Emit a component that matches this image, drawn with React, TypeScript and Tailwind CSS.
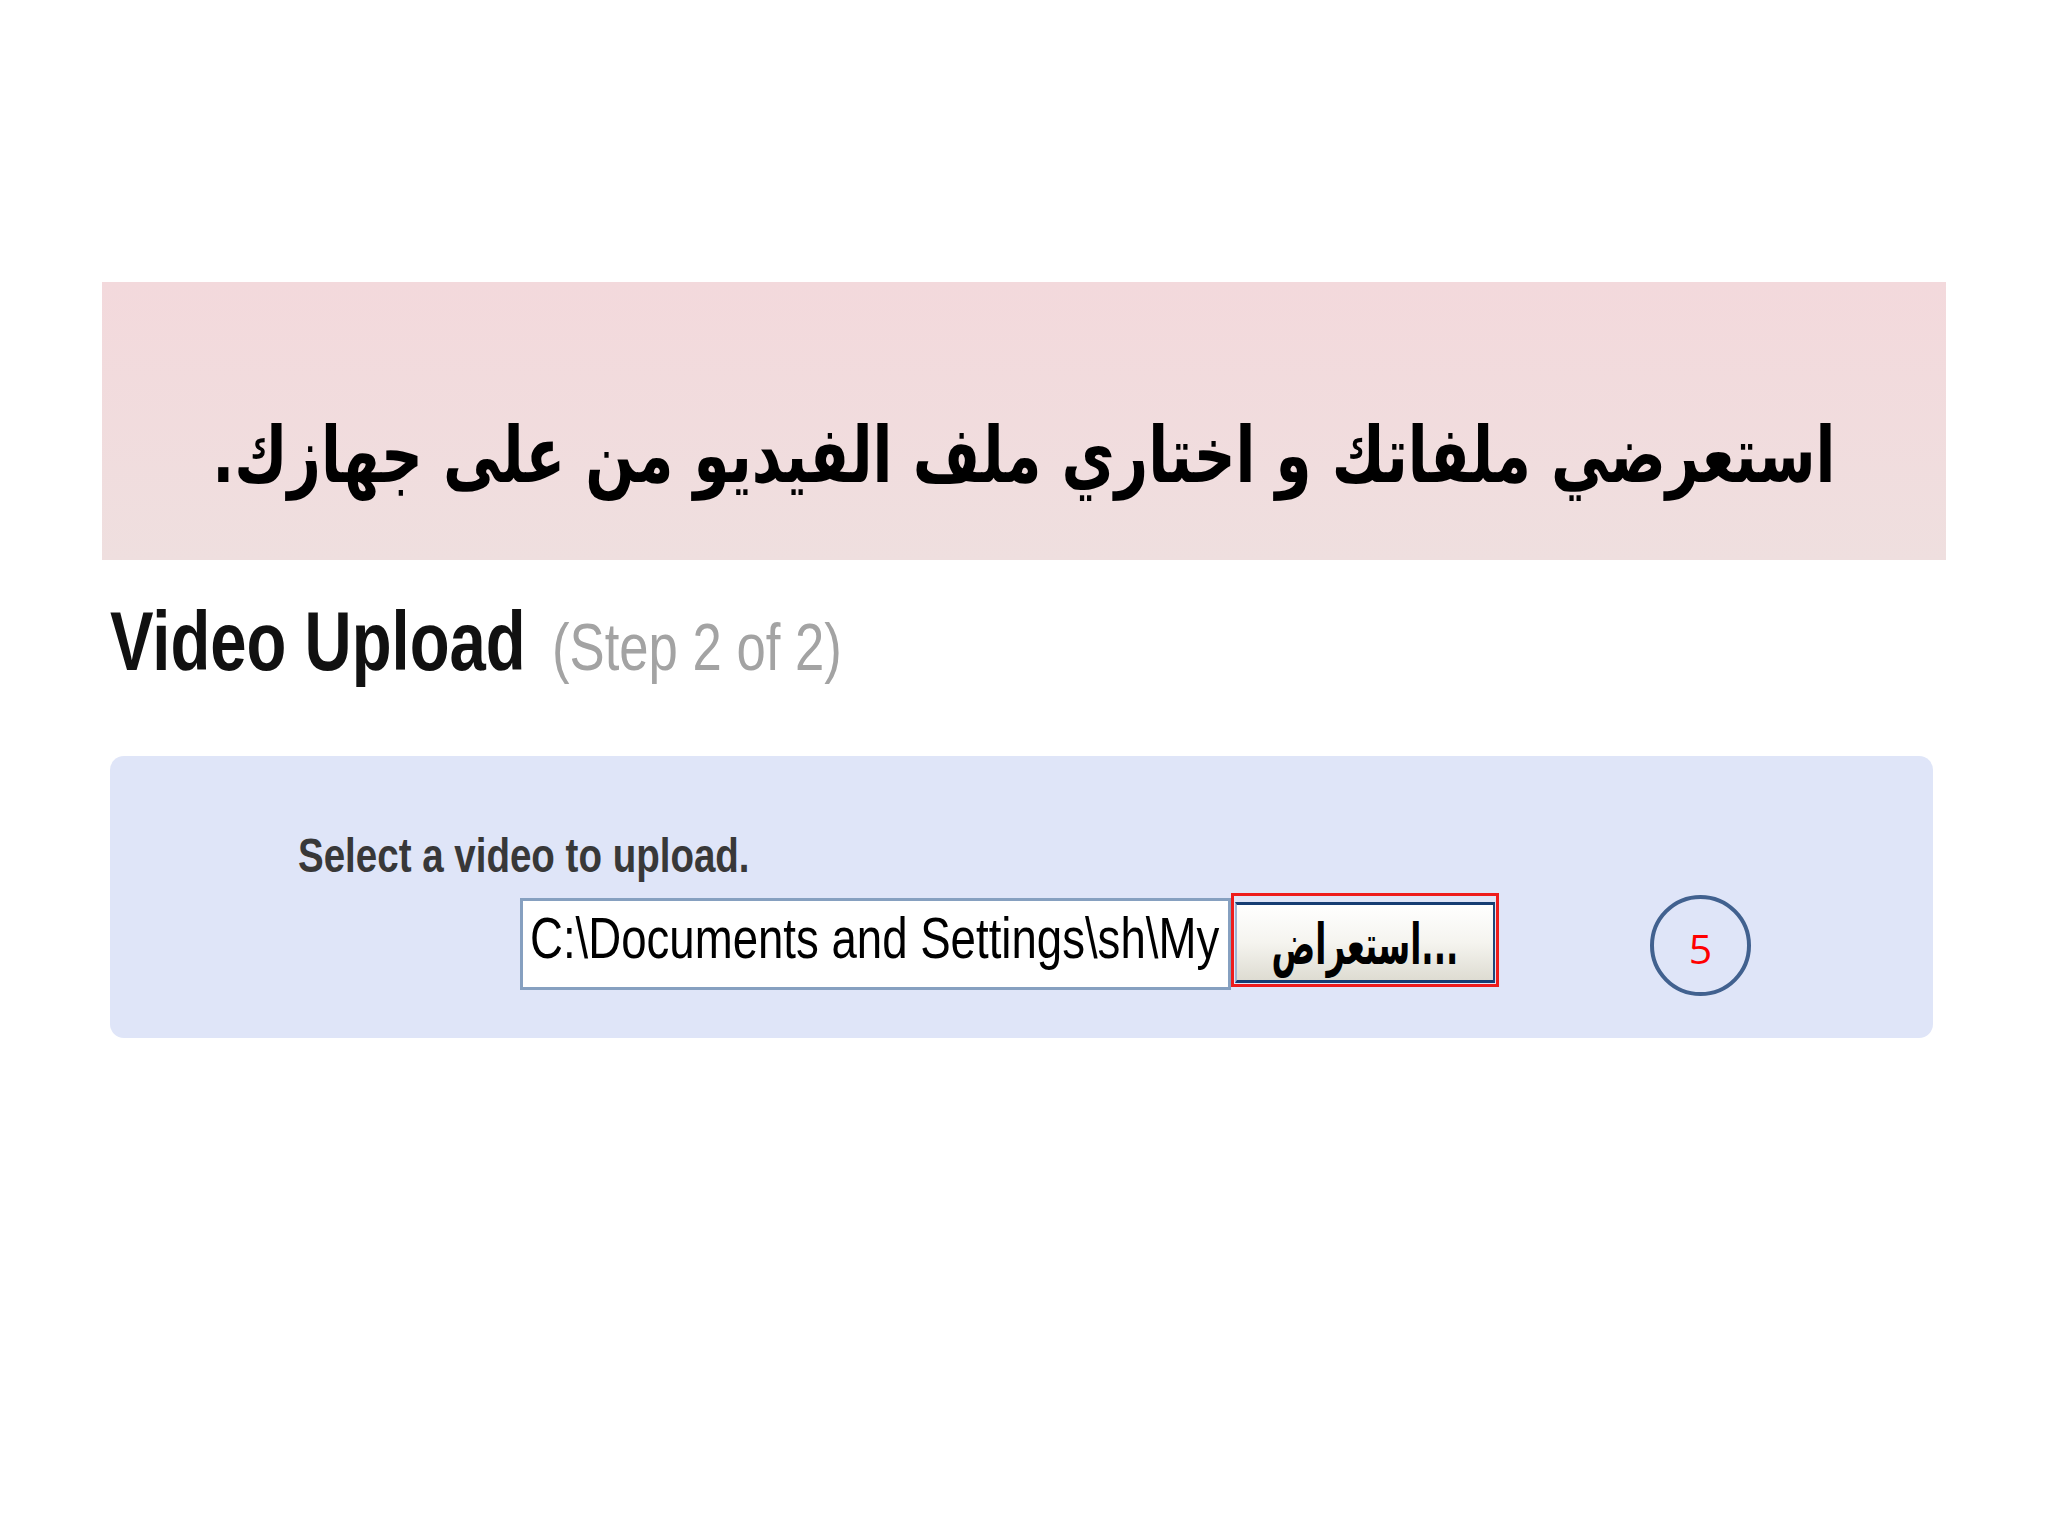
const latin = { fontFamily: '"Liberation Sans", Arial, sans-serif' };
const arabic = { fontFamily: '"DejaVu Sans", "Liberation Sans", sans-serif' };

// the source shot is squeezed horizontally; every latin label shares that ratio
function Squeezed({ children, className = '' }: { children: React.ReactNode; className?: string }) {
  return (
    <span className={`inline-block origin-left scale-x-[0.786] whitespace-nowrap ${className}`}>
      {children}
    </span>
  );
}

function BrowseButton() {
  return (
    <div className="h-[94px] w-[268px] border-[3px] border-[#ee1c1c] px-[1px] pt-[6px] pb-[1px]">
      <div className="flex h-full w-full items-center justify-center overflow-hidden border-x-2 border-y-[3px] border-t-[#163d73] border-b-[#163d73] border-l-[#9fb4d2] border-r-[#1f4479] bg-gradient-to-b from-white via-[#f5f4ef] to-[#dedcd2]">
        <span
          dir="ltr"
          className="inline-block shrink-0 origin-center scale-x-[0.58] pt-[4px] text-[56px] leading-none font-bold whitespace-nowrap text-black"
          style={arabic}>
          استعراض...
        </span>
      </div>
    </div>
  );
}

export default function App() {
  return (
    <div className="min-h-[1536px] w-[2048px] bg-white pt-[282px]">
      <div className="ml-[102px] flex h-[278px] w-[1844px] justify-center bg-gradient-to-b from-[#f3d9dc] to-[#efdfdf] pt-[134px]">
        <p
          dir="rtl"
          className="inline-block shrink-0 origin-center scale-x-[0.744] text-[78px] leading-none font-bold whitespace-nowrap text-black"
          style={arabic}>
          استعرضي ملفاتك و اختاري ملف الفيديو من على جهازك.
        </p>
      </div>

      <div className="mt-[40px] ml-[110px] flex h-[83px] items-baseline leading-none" style={latin}>
        <div className="w-[442px] text-[83px] font-bold text-[#111]">
          <Squeezed>Video Upload</Squeezed>
        </div>
        <div className="text-[67px] text-[#a3a3a3]">
          <Squeezed>(Step 2 of 2)</Squeezed>
        </div>
      </div>

      <div className="mt-[73px] ml-[110px] h-[282px] w-[1823px] rounded-[14px] bg-[#dfe5f8] pt-[75px] pl-[188px]" style={latin}>
        <div className="h-[49px] text-[49px] leading-none font-bold text-[#383838]">
          <Squeezed>Select a video to upload.</Squeezed>
        </div>

        <div className="mt-[13px] ml-[222px] flex items-start">
          <div className="mt-[5px] h-[92px] w-[711px] overflow-hidden border-[3px] border-[#86a0c0] bg-white pt-[8px] pl-[7px]">
            <div className="text-[58px] leading-none text-black">
              <Squeezed>C:\Documents and Settings\sh\My</Squeezed>
            </div>
          </div>
          <BrowseButton />
          <div className="mt-[2px] ml-[151px] flex h-[101px] w-[101px] items-center justify-center rounded-full border-4 border-[#41618f] pt-[6px]">
            <span className="text-[41px] leading-none text-[#ff0000]" style={{ fontFamily: '"Open Sans", "Liberation Sans", sans-serif' }}>
              5
            </span>
          </div>
        </div>
      </div>
    </div>
  );
}
